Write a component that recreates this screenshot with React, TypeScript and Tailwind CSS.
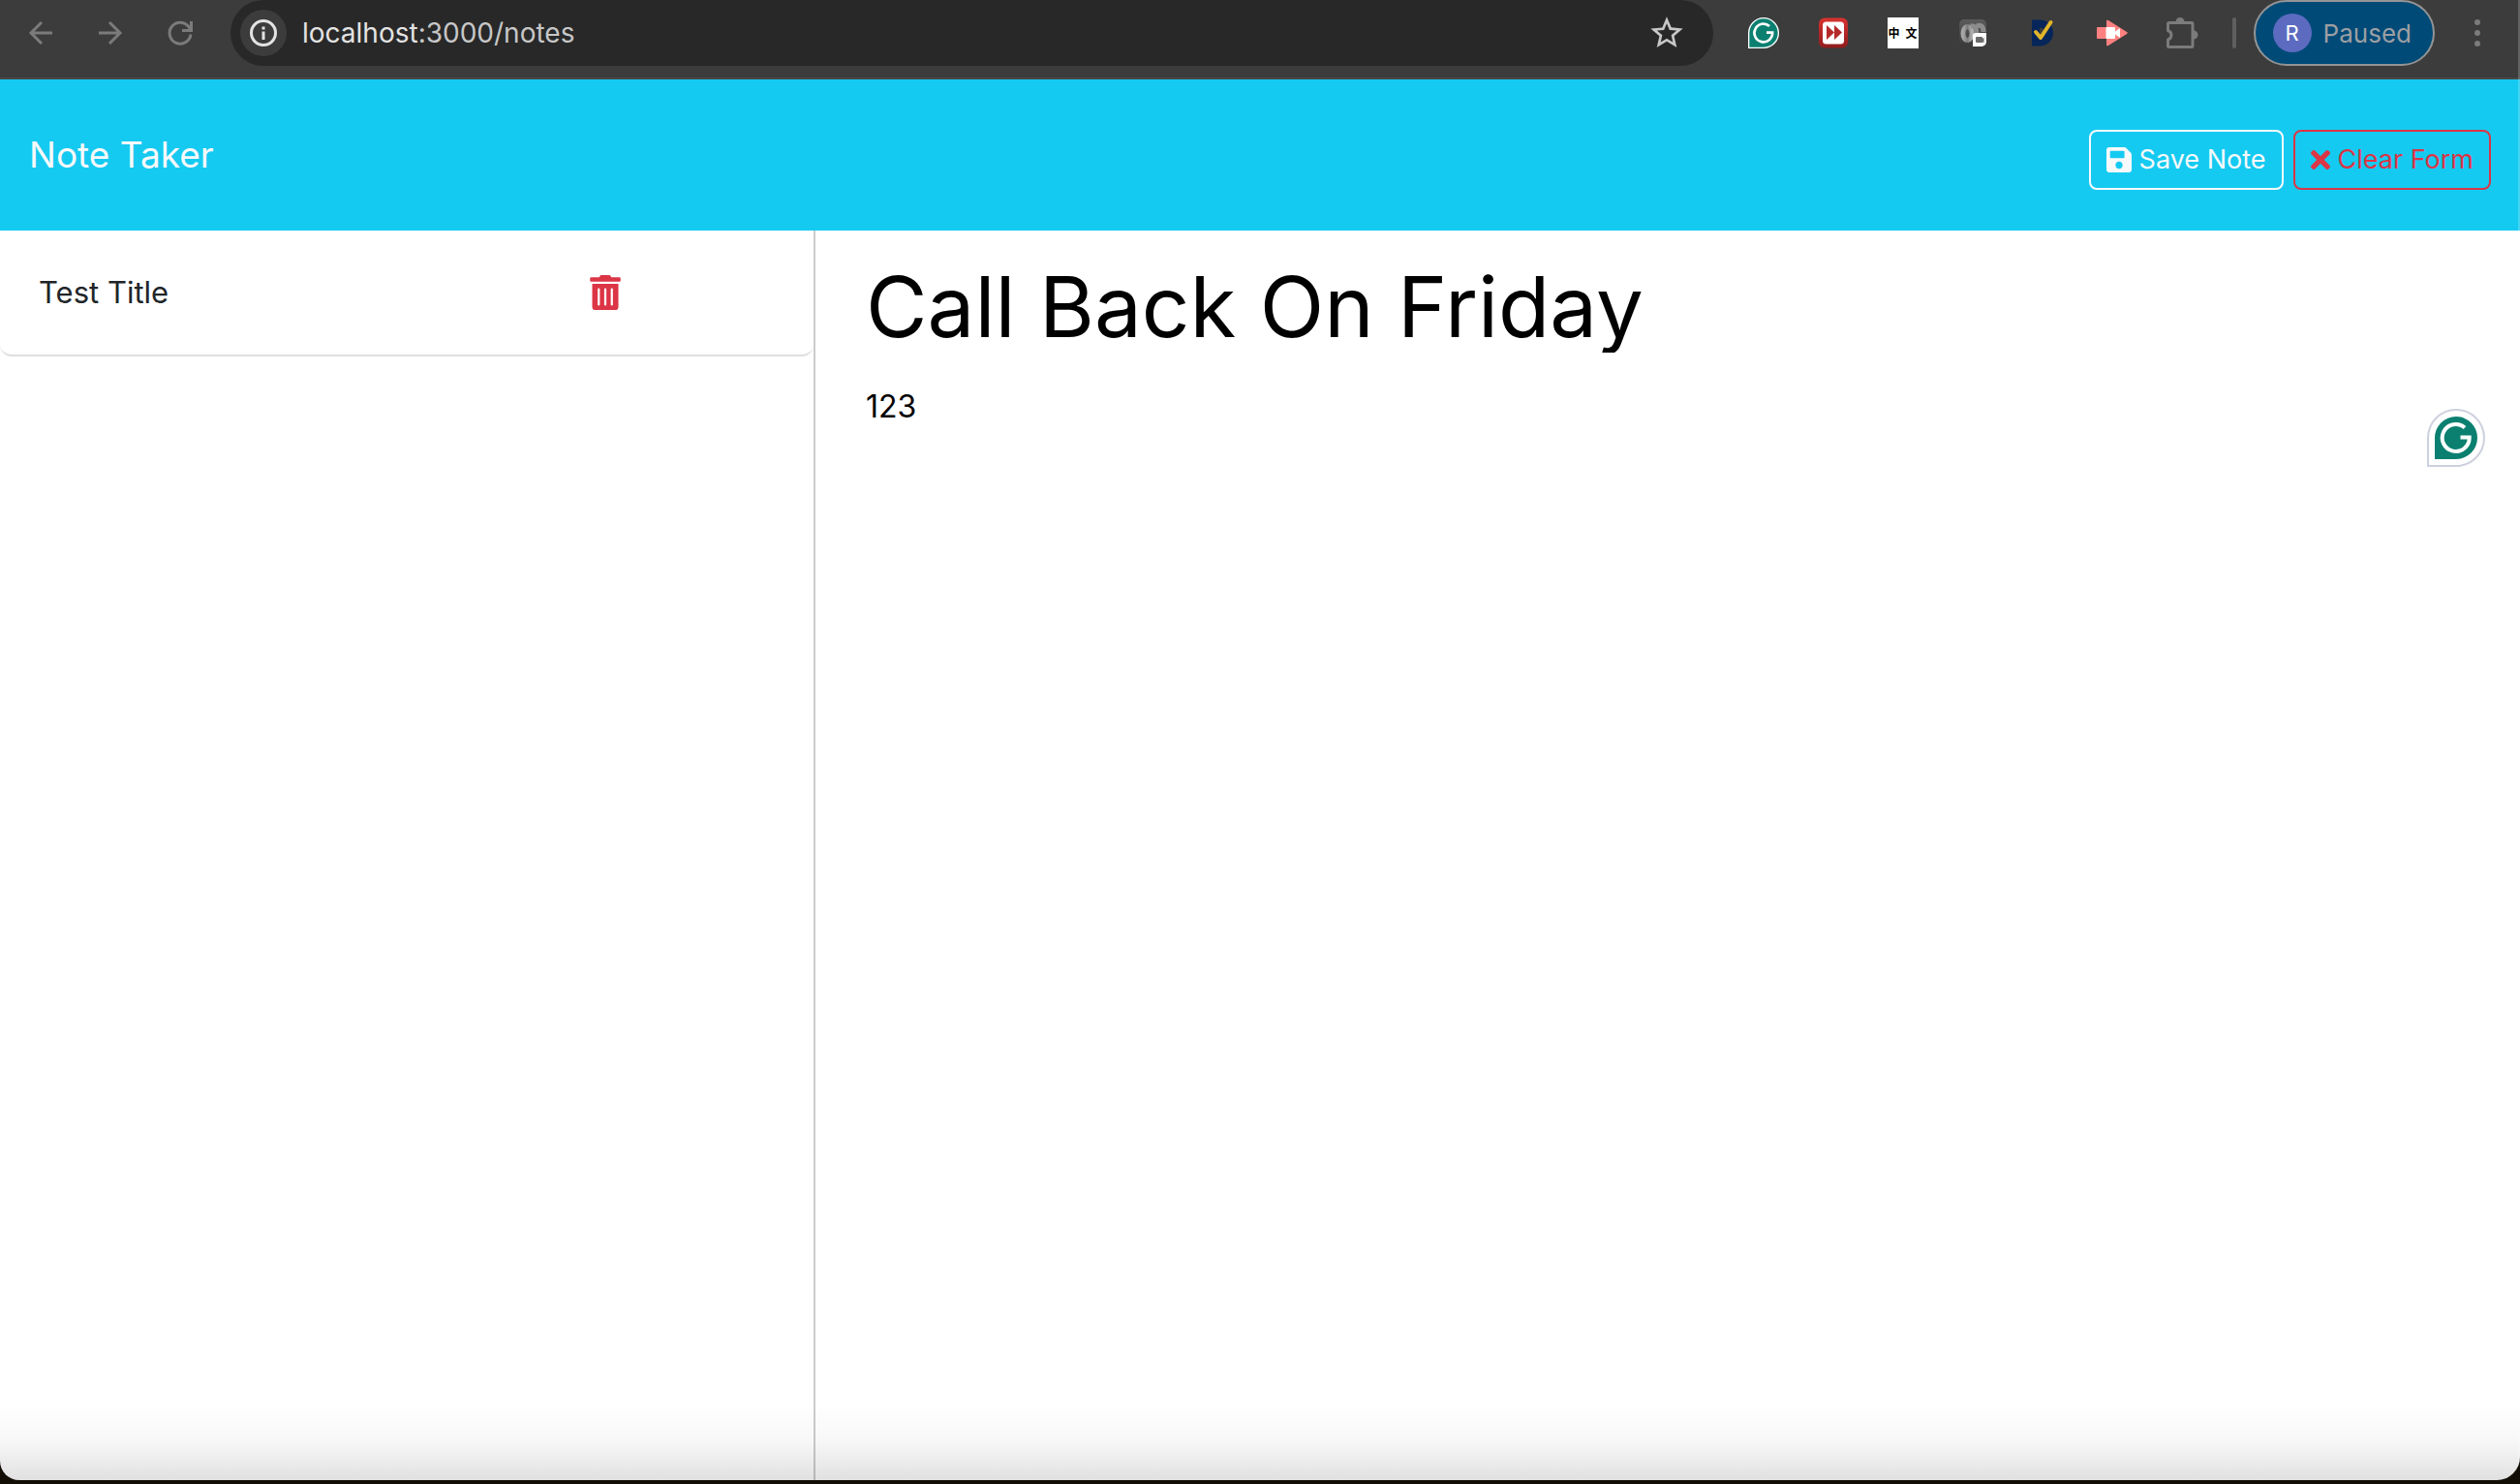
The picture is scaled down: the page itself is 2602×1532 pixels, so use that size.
import React from "react";
import { MdStarOutline } from "react-icons/md";
import { FaSave, FaTimes, FaTrashAlt } from "react-icons/fa";

function GrammarlyMark() {
  return (
    <g>
      <path d="M22 0a22 22 0 1 1 0 44H0V22A22 22 0 0 1 22 0z" fill="#0b8070" />
      <path d="M31 11.500A14 14 0 1 0 35.700 21.500H26.500" fill="none" stroke="#fff" strokeWidth="4" />
    </g>
  );
}

function GrammarlyIcon() {
  return (
    <svg className="size-8" viewBox="-2 -2 48 48" aria-hidden="true">
      <path d="M22 -2a24 24 0 1 1 0 48H-2V22A24 24 0 0 1 22 -2z" fill="#fff" />
      <GrammarlyMark />
    </svg>
  );
}

function SpeedIcon() {
  return (
    <svg className="size-8" viewBox="0 0 32 32" aria-hidden="true">
      <defs>
        <linearGradient id="speed" x1="0" y1="0" x2="0" y2="1">
          <stop offset="0" stopColor="#d8332f" />
          <stop offset="1" stopColor="#8f1c1c" />
        </linearGradient>
      </defs>
      <rect x="1" y="0.500" width="30" height="31" rx="6" fill="url(#speed)" />
      <rect x="5" y="4.500" width="22" height="23" rx="3.500" fill="#fff" />
      <path d="M9 8l8 7.500L9 23zM17 8l8 7.500-8 7.500z" fill="#b52a28" />
    </svg>
  );
}

function RecorderIcon() {
  return (
    <svg className="size-7" viewBox="0 0 28 28" aria-hidden="true">
      <defs>
        <linearGradient id="rec" x1="0" y1="0" x2="0" y2="1">
          <stop offset="0" stopColor="#5c5c5c" />
          <stop offset="1" stopColor="#3a3a3a" />
        </linearGradient>
        <linearGradient id="loop" x1="0" y1="0" x2="1" y2="0">
          <stop offset="0" stopColor="#a6a6a6" />
          <stop offset="0.500" stopColor="#7d7d7d" />
          <stop offset="1" stopColor="#b0b0b0" />
        </linearGradient>
      </defs>
      <rect width="28" height="28" rx="5" fill="url(#rec)" />
      <ellipse cx="8.500" cy="14.500" rx="4.500" ry="7" fill="none" stroke="url(#loop)" strokeWidth="5" />
      <path d="M12 7c4-1 6 2 6 8M18 7c5-2 7 1 7 6" fill="none" stroke="#8c8c8c" strokeWidth="5" />
      <path d="M17 14h11v9a5 5 0 0 1-5 5h-9V17a3 3 0 0 1 3-3z" fill="#fff" />
      <path d="M18 18h5a1 1 0 0 1 1 1v1l1.500-1.500v6L24 23v1H18a1 1 0 0 1-1-1v-4a1 1 0 0 1 1-1z" fill="#6b6b6b" />
    </svg>
  );
}

function CheckIcon() {
  return (
    <svg className="size-8" viewBox="0 0 32 32" aria-hidden="true">
      <path d="M9 6.500h4.500a9.500 9.500 0 0 1 0 19H9z" fill="none" stroke="#06265a" strokeWidth="8" />
      <path d="M9 15l5 6L24.500 5" fill="none" stroke="#e0b529" strokeWidth="4" strokeLinecap="round" strokeLinejoin="round" />
    </svg>
  );
}

function CastIcon() {
  return (
    <svg className="size-8" viewBox="0 0 32 32" aria-hidden="true">
      <rect x="0" y="10" width="10" height="12" rx="1" fill="#ff8080" />
      <path d="M10 3q1-0.500 2 0l19 12q1.500 1 0 2L12 29q-1 0.500-2 0z" fill="#ff8080" />
      <path d="M9.500 10H18a1 1 0 0 1 1 1v3.500l5-3.500v10l-5-3.500V21a1 1 0 0 1-1 1H9.500z" fill="#fff" />
    </svg>
  );
}

function PuzzleIcon() {
  return (
    <svg className="h-8 w-9 shrink-0" viewBox="0 0 36 32" aria-hidden="true">
      <path
        d="M4 5.500h24a1 1 0 0 1 1 1v23a1 1 0 0 1-1 1H4.500a1 1 0 0 1-1-1V23a5 5 0 0 0 0-9.500V6.500a1 1 0 0 1 1-1z"
        fill="none"
        stroke="#7b7b7b"
        strokeWidth="3"
        strokeLinejoin="round"
      />
      <path d="M11.500 4.500a4.500 4.500 0 0 1 9 0zM30 13.500a4.500 4.500 0 0 1 0 9z" fill="#7b7b7b" />
    </svg>
  );
}

function NavIcon({ d }: { d: string }) {
  return (
    <svg className="size-9" viewBox="0 0 36 36" fill="none" stroke="currentColor" strokeWidth="3" aria-hidden="true">
      <path d={d} />
    </svg>
  );
}

function ExtensionButton({ label, children }: { label: string; children: React.ReactNode }) {
  return (
    <button type="button" aria-label={label} className="flex size-8 shrink-0 items-center justify-center">
      {children}
    </button>
  );
}

function BrowserBar() {
  return (
    <div className="flex shrink-0 items-center border-b-2 border-[#484848] bg-[#3c3c3c] pb-3">
      <div className="flex shrink-0 items-center gap-9 px-6 text-[#7b7b7b]">
        <button type="button" aria-label="Back"><NavIcon d="M30 18H8M19 7L8 18l11 11" /></button>
        <button type="button" aria-label="Forward"><NavIcon d="M6 18h22M17 7l11 11-11 11" /></button>
        <button type="button" aria-label="Reload"><NavIcon d="M29 19.500A11 11 0 1 1 26 10.500l3 4M29.500 6v9.500H20" /></button>
      </div>
      <div className="ml-2.5 flex h-[68px] min-w-0 flex-1 items-center rounded-full bg-[#282828] pl-2.5 pr-7">
        <button type="button" aria-label="Site information" className="flex size-12 shrink-0 items-center justify-center rounded-full bg-[#3c3c3c] text-[#e3e3e3]">
          <svg className="size-7" viewBox="0 0 28 28" fill="none" stroke="currentColor" strokeWidth="3" aria-hidden="true">
            <circle cx="14" cy="14" r="12.500" />
            <path d="M14 12.500V21M14 7.500v3" />
          </svg>
        </button>
        <div className="ml-4 flex-1 text-[28px] leading-9 text-[#c7c7c7]">
          <span className="text-[#e3e3e3]">localhost</span>:3000/notes
        </div>
        <button type="button" aria-label="Bookmark this page" className="text-[#c7c7c7]">
          <MdStarOutline className="size-10" />
        </button>
      </div>
      <div className="ml-9 flex shrink-0 items-center gap-10">
        <ExtensionButton label="Grammarly"><GrammarlyIcon /></ExtensionButton>
        <ExtensionButton label="Video speed"><SpeedIcon /></ExtensionButton>
        <ExtensionButton label="Chinese dictionary">
          <span className="flex size-8 items-center justify-between bg-white px-px font-['Noto_Sans_CJK_SC',sans-serif] text-[12px] font-bold leading-none text-black">
            <span>中</span><span>文</span>
          </span>
        </ExtensionButton>
        <ExtensionButton label="Recorder"><RecorderIcon /></ExtensionButton>
        <ExtensionButton label="Checker"><CheckIcon /></ExtensionButton>
        <ExtensionButton label="Screen cast"><CastIcon /></ExtensionButton>
        <ExtensionButton label="Extensions"><PuzzleIcon /></ExtensionButton>
      </div>
      <div className="ml-9 h-8 w-1 shrink-0 rounded-full bg-[#5f5f5f]" />
      <button type="button" className="ml-[18px] flex h-[68px] shrink-0 items-center gap-3 rounded-full border-2 border-[#949494] bg-[#004a77] pl-[18px] pr-[22px] text-[26px] text-[#9c9fa3]">
        <span className="flex size-10 items-center justify-center rounded-full bg-[#5c6bc0] text-[22px] text-white">R</span>
        Paused
      </button>
      <button type="button" aria-label="Menu" className="mr-9 ml-9 flex w-4 shrink-0 flex-col items-center gap-[5px]">
        <span className="size-1.5 rounded-full bg-[#7b7b7b]" />
        <span className="size-1.5 rounded-full bg-[#7b7b7b]" />
        <span className="size-1.5 rounded-full bg-[#7b7b7b]" />
      </button>
    </div>
  );
}

export default function App() {
  return (
    <div className="flex min-h-screen flex-col bg-[#120e05] pb-1 font-['Inter','Liberation_Sans',sans-serif]">
      <div className="relative flex flex-1 flex-col overflow-hidden rounded-bl-[20px] rounded-br-[24px] bg-white">
        <BrowserBar />
        <nav className="flex h-[156px] shrink-0 items-center justify-between bg-[#15caf1] px-[30px]">
          <a href="#notes" className="text-[37px] leading-[60px] text-[#f8f9fa]">Note Taker</a>
          <div className="mt-2.5 flex gap-2.5 text-[27px]">
            <button type="button" className="flex h-[62px] items-center gap-2 rounded-lg border-2 border-[#f8f9fa] px-4 text-[#f8f9fa]">
              <FaSave className="h-[30px] w-[26px]" />Save Note
            </button>
            <button type="button" className="flex h-[62px] items-center gap-2 rounded-lg border-2 border-[#dc3545] px-4 text-[#dc3545]">
              <FaTimes className="h-[30px] w-5" />Clear Form
            </button>
          </div>
        </nav>
        <main className="flex flex-1">
          <aside className="w-[842px] shrink-0 border-r-2 border-[#ccc]">
            <ul>
              <li className="flex h-[130px] items-center rounded-b-xl border-b-2 border-[#dfdfdf] pl-10 text-[31px] text-[#212529]">
                <span className="w-[567px]">Test Title</span>
                <button type="button" aria-label="Delete note" className="text-[#dc3545]">
                  <FaTrashAlt className="size-9" />
                </button>
              </li>
            </ul>
          </aside>
          <section className="relative flex flex-1 flex-col px-[52px] pt-8">
            <input aria-label="Note title" defaultValue="Call Back On Friday" className="h-[94px] w-full text-[87px] leading-24 text-black outline-none" />
            <textarea aria-label="Note text" defaultValue="123" className="mt-8 w-full flex-1 resize-none text-[32px] leading-12 text-black outline-none" />
            <button type="button" aria-label="Open Grammarly" className="absolute top-[184px] right-9">
              <svg className="size-[60px]" viewBox="0 0 60 60" aria-hidden="true">
                <path d="M30 1a29 29 0 1 1 0 58H1V30A29 29 0 0 1 30 1z" fill="#fff" stroke="#cdd0de" strokeWidth="2" />
                <g transform="translate(8 8)"><GrammarlyMark /></g>
              </svg>
            </button>
          </section>
        </main>
        <div className="pointer-events-none absolute inset-x-0 bottom-0 h-20 bg-linear-to-b from-black/0 via-black/3 to-black/12" />
        <div className="pointer-events-none absolute inset-y-0 right-0 w-0.5 bg-white/20" />
      </div>
    </div>
  );
}
